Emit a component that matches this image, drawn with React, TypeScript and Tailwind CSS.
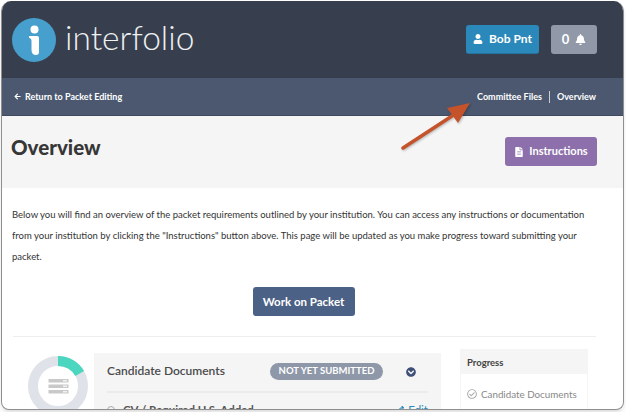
import React from 'react';
import { FaArrowLeft, FaBell, FaChevronCircleDown, FaFileAlt, FaPencilAlt, FaRegCheckCircle, FaUser } from 'react-icons/fa';

const Logo = () => (
  <svg width="44" height="44" viewBox="0 0 44 44" aria-hidden="true">
    <circle cx="22" cy="22" r="22" fill="#479fcd" />
    <circle cx="22.500" cy="11.500" r="4" fill="#fff" />
    <path d="M17 18h8c1.200 0 2 .8 2 2v14c0 2-1 3-3 3-3 0-4.500-2-4.500-5V23c0-1.800-.8-2.600-2.500-3.200z" fill="#fff" />
  </svg>
);

const Donut = () => (
  <svg width="60" height="60" viewBox="0 0 60 60" aria-hidden="true">
    <circle cx="30" cy="30" r="25" fill="none" stroke="#dfe2e8" strokeWidth="10" />
    <path d="M30 5a25 25 0 0 1 21.700 12.600" fill="none" stroke="#4bd6c0" strokeWidth="10" />
    <rect x="20.500" y="23" width="20" height="3.500" fill="#c9c9c9" />
    <rect x="20.500" y="28.500" width="20" height="3.500" fill="#c9c9c9" />
    <rect x="20.500" y="34" width="20" height="3.500" fill="#c9c9c9" />
    <rect x="35" y="24" width="4" height="1.500" fill="#f1f1f1" />
    <rect x="35" y="29.500" width="4" height="1.500" fill="#f1f1f1" />
    <rect x="35" y="35" width="4" height="1.500" fill="#f1f1f1" />
  </svg>
);

const Arrow = () => (
  <svg className="absolute left-[395px] top-[98px] drop-shadow-[1px_1px_1px_rgba(0,0,0,0.25)]" width="80" height="58" viewBox="0 0 80 58" aria-hidden="true">
    <path d="M6 49 L55 17" stroke="#c4532b" strokeWidth="3.500" strokeLinecap="round" />
    <path d="M73 4 L50 9 L61 24z" fill="#c4532b" />
  </svg>
);

export default function App() {
  return (
    <div className="w-[626px] h-[412px] bg-white overflow-hidden font-['Lato',sans-serif]">
      <div className="relative w-[623px] h-[409px] ml-[1px] mt-[1px] rounded-t-[10px] rounded-b-[8px] overflow-hidden border-x border-b border-[#8f8f8f] bg-white shadow-md">
        <header className="h-[77px] bg-[#373f4e] flex items-center justify-between pl-[10px] pr-[26px]">
          <div className="flex items-center gap-[9px]">
            <Logo />
            <span className="text-[33.5px] leading-none font-light text-[#eef0f2] pb-[4px]">interfolio</span>
          </div>
          <div className="flex items-center gap-[12px]">
            <button className="w-[73px] h-[29px] rounded-[3px] bg-[#2b88ba] border-b border-[#25749f] text-white text-[12px] font-bold flex items-center justify-center gap-[6px]">
              <FaUser size={10} />
              Bob Pnt
            </button>
            <button className="w-[46px] h-[29px] rounded-[3px] bg-[#9199a8] text-white text-[13px] font-bold flex items-center justify-center gap-[6px]">
              0
              <FaBell size={11} />
            </button>
          </div>
        </header>
        <nav className="h-[38px] bg-[#4b5870] border-b border-[#3f4a60] flex items-center justify-between pl-[12px] pr-[27px] text-[9px] font-bold text-white">
          <div className="flex items-center gap-[4px]">
            <FaArrowLeft size={7} />
            <span>Return to Packet Editing</span>
          </div>
          <div className="flex items-center">
            <span>Committee Files</span>
            <span className="mx-[7px] w-px h-[12px] bg-[#c9ced8]" />
            <span>Overview</span>
          </div>
        </nav>
        <section className="h-[72px] bg-[#f5f5f5] flex justify-between pl-[9px] pr-[26px]">
          <h1 className="text-[20.5px] font-black text-[#373737] mt-[16px] leading-[30px]">Overview</h1>
          <button className="mt-[21px] w-[92px] h-[29px] rounded-[3px] bg-[#8c6fab] text-white text-[11px] font-bold flex items-center justify-center gap-[5px]">
            <FaFileAlt size={10} />
            Instructions
          </button>
        </section>
        <p className="pl-[10px] pr-[30px] pt-[16px] text-[9.5px] leading-[21px] text-[#333]">
          Below you will find an overview of the packet requirements outlined by your institution. You can access any instructions or documentation from your institution by clicking the "Instructions" button above. This page will be updated as you make progress toward submitting your packet.
        </p>
        <div className="flex justify-center pt-[20px] pr-[18px]">
          <button className="w-[102px] h-[29px] rounded-[3px] bg-[#4b6185] text-white text-[11.5px] font-bold">Work on Packet</button>
        </div>
        <div className="ml-[11px] mr-[27px] mt-[20px] border-t border-[#eeeeee]" />
        <div className="flex pl-[26px] pt-[16px]">
          <div className="pt-[3px] w-[66px] shrink-0"><Donut /></div>
          <div className="w-[347px] h-[60px] bg-[#f5f5f5] pl-[13px] pr-[13px] pt-[9px] shrink-0 overflow-hidden">
            <div className="flex items-center justify-between border-b-2 border-[#ebebeb] pb-[10px]">
              <span className="text-[12px] font-semibold text-[#4b4b4b] w-[163px] pb-[1px]">Candidate Documents</span>
              <span className="rounded-full bg-[#8f98a9] text-white text-[9.5px] font-bold w-[113px] h-[17px] flex items-center justify-center">NOT YET SUBMITTED</span>
              <span className="text-[#3f5078] mr-[12px] ml-[23px]"><FaChevronCircleDown size={10} /></span>
            </div>
            <div className="flex justify-between items-center text-[11.5px] pt-[10px] leading-[14px]">
              <span className="flex items-center gap-[8px] font-bold text-[#555]">
                <span className="w-[8px] h-[8px] rounded-full border border-[#aaa]" />
                CV / Required U.S. Added
              </span>
              <span className="text-[#2b88ba] flex items-center gap-[4px]"><FaPencilAlt size={8} />Edit</span>
            </div>
          </div>
          <div className="ml-[19px] w-[128px] shrink-0 -mt-[4px] border-x border-[#f5f5f5]">
            <div className="h-[25px] bg-[#f5f5f5] pl-[6px] pt-[3px] text-[9.5px] font-bold text-[#444] flex items-center">Progress</div>
            <div className="pl-[6px] pt-[13px] flex items-center gap-[4px] text-[9.8px] text-[#888]">
              <FaRegCheckCircle size={10} color="#aaa" />
              Candidate Documents
            </div>
          </div>
        </div>
        <Arrow />
      </div>
    </div>
  );
}
